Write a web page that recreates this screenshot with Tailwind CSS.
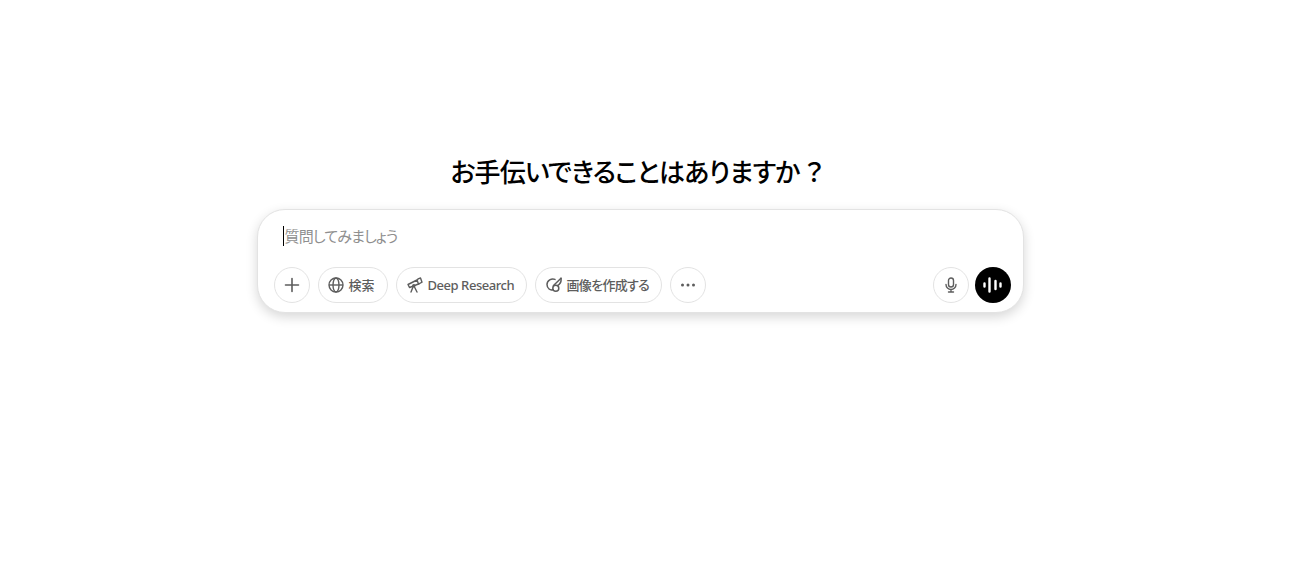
<!DOCTYPE html>
<html lang="ja">
<head>
  <meta charset="UTF-8" />
  <title>ChatGPT</title>
  <script src="https://cdn.jsdelivr.net/npm/@tailwindcss/browser@4"></script>
</head>
<body class="bg-white min-h-screen flex flex-col items-center pt-[151px] pr-[10px] font-['Noto_Sans','Noto_Sans_CJK_JP',sans-serif] [font-feature-settings:'palt']">
  <h1 class="h-[42px] mr-[7px] text-[26px] leading-[42px] font-medium tracking-[-0.8px] text-black">お手伝いできることはありますか<span class="ml-[5px] [font-feature-settings:'normal']">？</span></h1>

  <div class="mt-[16px] w-[767px] h-[104px] rounded-[28px] border border-[#e3e3e3] bg-white shadow-[0_4px_12px_rgba(0,0,0,0.16)] px-[16px] pt-[16px]">
    <div class="h-[20px] flex items-center pl-[9px]">
      <span class="w-px h-[20px] bg-black"></span>
      <span class="ml-[1px] text-[15px] leading-[20px] tracking-[-0.8px] text-[#8f8f8f]">質問してみましょう</span>
    </div>

    <div class="mt-[21px] flex items-center justify-between">
      <div class="flex items-center gap-[8px]">
        <button class="w-[36px] h-[36px] rounded-full border border-[#e3e3e3] flex items-center justify-center text-[#5d5d5d]">
          <svg width="18" height="18" viewBox="0 0 18 18" fill="none" stroke="currentColor" stroke-width="1.6" stroke-linecap="round"><path d="M9 2.500v13M2.500 9h13"/></svg>
        </button>
        <button class="w-[70px] h-[36px] rounded-full border border-[#e3e3e3] flex items-center pl-[9px] gap-[5px] text-[13px] font-medium text-[#5d5d5d]">
          <svg width="16" height="16" viewBox="0 0 16 16" fill="none" stroke="currentColor" stroke-width="1.4"><circle cx="8" cy="8" r="7"/><ellipse cx="8" cy="8" rx="3" ry="7"/><path d="M1 8h14"/></svg>
          <span class="pt-[2px]">検索</span>
        </button>
        <button class="w-[131px] h-[36px] rounded-full border border-[#e3e3e3] flex items-center pl-[10px] gap-[5px] text-[13px] font-medium text-[#5d5d5d]">
          <svg width="16" height="16" viewBox="0 0 16 16" fill="none" stroke="currentColor" stroke-width="1.4" stroke-linejoin="round" stroke-linecap="round"><path d="M1 7.500 2.500 10.500 11.500 7 10 3z"/><path d="M10.500 3 11 1.800 13.500 1l1.500 4.200-2.300 1.300-1.200.5"/><circle cx="6.800" cy="8.800" r="1"/><path d="M6 10 4 15M7.500 10l2.500 5"/></svg>
          <span class="pt-[2px] tracking-[-0.45px]">Deep Research</span>
        </button>
        <button class="w-[127px] h-[36px] rounded-full border border-[#e3e3e3] flex items-center pl-[10px] gap-[5px] text-[13px] font-medium text-[#5d5d5d]">
          <svg width="16" height="16" viewBox="0 0 16 16" fill="none" stroke="currentColor" stroke-width="1.5" stroke-linejoin="round" stroke-linecap="round"><path d="M9 2.400C5.500 1 1 3.400 1 7.500c0 3.800 3.500 6.500 6 5"/><path d="M15 1.200 7.500 8.500"/><path d="M15 1.200c.5 3.300-1 6-3.500 7.500"/><circle cx="9.800" cy="11.300" r="3"/></svg>
          <span class="pt-[2px] tracking-[-0.7px]">画像を作成する</span>
        </button>
        <button class="w-[36px] h-[36px] rounded-full border border-[#e3e3e3] flex items-center justify-center text-[#5d5d5d]">
          <svg width="16" height="16" viewBox="0 0 16 16" fill="currentColor"><circle cx="2.500" cy="8" r="1.500"/><circle cx="8" cy="8" r="1.500"/><circle cx="13.500" cy="8" r="1.500"/></svg>
        </button>
      </div>

      <div class="flex items-center gap-[6px] -mr-[4px]">
        <button class="w-[36px] h-[36px] rounded-full border border-[#e3e3e3] flex items-center justify-center text-[#5d5d5d]">
          <svg width="16" height="16" viewBox="0 0 16 16" fill="none" stroke="currentColor" stroke-width="1.4" stroke-linecap="round"><rect x="5.500" y="1" width="5" height="9" rx="2.500"/><path d="M3 7.500a5 5 0 0 0 10 0M8 12.500V15M5.500 15h5"/></svg>
        </button>
        <button class="w-[36px] h-[36px] rounded-full bg-black flex items-center justify-center text-white">
          <svg width="20" height="20" viewBox="0 0 20 20" fill="none" stroke="currentColor" stroke-width="2.400" stroke-linecap="round"><path d="M1.500 8.500v3M6.500 3.500v13M12.500 6v8M17.500 8.500v3"/></svg>
        </button>
      </div>
    </div>
  </div>
</body>
</html>
